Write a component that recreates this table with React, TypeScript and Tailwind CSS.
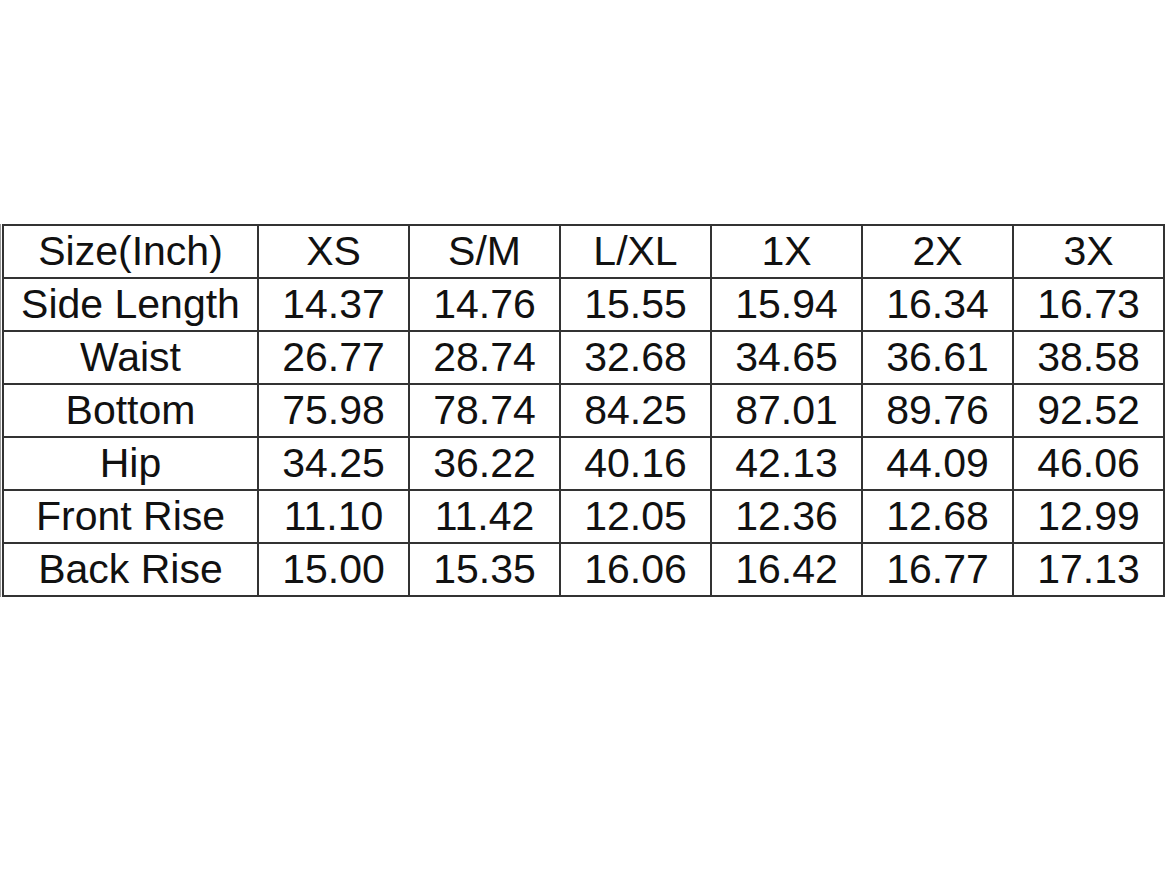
const header = ["Size(Inch)", "XS", "S/M", "L/XL", "1X", "2X", "3X"];

const rows: string[][] = [
  ["Side Length", "14.37", "14.76", "15.55", "15.94", "16.34", "16.73"],
  ["Waist", "26.77", "28.74", "32.68", "34.65", "36.61", "38.58"],
  ["Bottom", "75.98", "78.74", "84.25", "87.01", "89.76", "92.52"],
  ["Hip", "34.25", "36.22", "40.16", "42.13", "44.09", "46.06"],
  ["Front Rise", "11.10", "11.42", "12.05", "12.36", "12.68", "12.99"],
  ["Back Rise", "15.00", "15.35", "16.06", "16.42", "16.77", "17.13"],
];

export default function App() {
  return (
    <div
      className="w-[1170px] h-[877px] bg-white overflow-hidden text-[#111]"
      style={{ fontFamily: '"Liberation Sans", Arial, sans-serif' }}
    >
      {/* size chart */}
      <div className="flex mt-[224px]">
        <div className="w-px h-[373px] bg-[#999]" />
        <table className="ml-px table-fixed border-collapse border-2 border-[#333] w-[1162px]">
          <colgroup>
            <col className="w-[255px]" />
            <col className="w-[151px]" />
            <col className="w-[151px]" />
            <col className="w-[151px]" />
            <col className="w-[151px]" />
            <col className="w-[151px]" />
            <col className="w-[151px]" />
          </colgroup>
          <tbody>
            <tr className="h-[53px]">
              {header.map((h) => (
                <td
                  key={h}
                  className="border-2 border-[#333] text-center text-[41px] leading-none p-0"
                >
                  {h}
                </td>
              ))}
            </tr>
            {rows.map((r) => (
              <tr key={r[0]} className="h-[53px]">
                {r.map((c, i) => (
                  <td
                    key={i}
                    className="border-2 border-[#333] text-center text-[41px] leading-none p-0"
                  >
                    {c}
                  </td>
                ))}
              </tr>
            ))}
          </tbody>
        </table>
      </div>
    </div>
  );
}
